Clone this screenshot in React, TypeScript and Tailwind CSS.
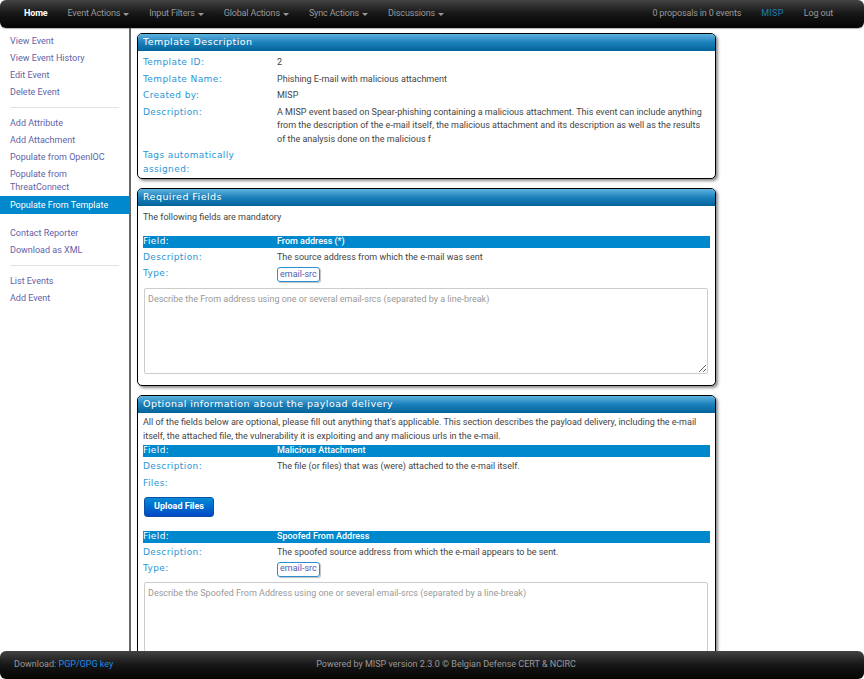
import React from "react";

const label = "font-['DejaVu_Sans',sans-serif] text-[9px] tracking-[0.4px] text-[#2a95d4]";
const body = "font-['Roboto',sans-serif] text-[9px] text-[#444]";

function Caret() {
  return (
    <span className="ml-[3px] inline-block h-0 w-0 border-x-[3px] border-t-[3px] border-x-transparent border-t-[#999] align-middle" />
  );
}

function NavItem({ text, caret, active }: { text: string; caret?: boolean; active?: boolean }) {
  return (
    <span
      className={
        "flex items-center px-[10px] tracking-[-0.15px] " +
        (active ? "font-bold text-white" : "text-[#999]")
      }
    >
      {text}
      {caret ? <Caret /> : null}
    </span>
  );
}

function SideLink({ children, active }: { children: React.ReactNode; active?: boolean }) {
  return (
    <div
      className={
        "px-[10px] leading-[13px] " +
        (active ? "bg-[#0088cc] py-[2.5px] text-white" : "py-[2px] text-[#5f63a8]")
      }
    >
      {children}
    </div>
  );
}

function Divider() {
  return <div className="mx-[10px] my-[6px] h-[2px] border-t border-[#e2e2e2] border-b-white" />;
}

function Panel({ title, children, className }: { title: string; children: React.ReactNode; className?: string }) {
  return (
    <div
      className={
        "w-[579px] rounded-[5px] border border-black bg-white shadow-[2px_2px_3px_rgba(0,0,0,0.45)] " +
        (className ?? "")
      }
    >
      <div className="flex h-[17px] items-center rounded-t-[4px] bg-gradient-to-b from-[#5cb3de] via-[#1a80bb] to-[#04639a] px-[5px] font-['DejaVu_Sans',sans-serif] text-[9.5px] tracking-[0.45px] text-white">
        {title}
      </div>
      <div className="px-[5px]">{children}</div>
    </div>
  );
}

function Row({ name, children, className }: { name: string; children?: React.ReactNode; className?: string }) {
  return (
    <div className={"flex leading-[13.5px] " + (className ?? "")}>
      <div className={"w-[134px] shrink-0 " + label}>{name}</div>
      <div className={"flex-1 " + body}>{children}</div>
    </div>
  );
}

function FieldBar({ value, className }: { value: string; className?: string }) {
  return (
    <div className={"flex h-[12px] items-center bg-[#0088cc] text-white " + (className ?? "")}>
      <div className="w-[134px] shrink-0 font-['DejaVu_Sans',sans-serif] text-[9px] tracking-[0.4px]">Field:</div>
      <div className="font-['Roboto',sans-serif] text-[9px] font-medium">{value}</div>
    </div>
  );
}

function TypeRow({ className }: { className?: string }) {
  return (
    <div className={"flex h-[15px] " + (className ?? "")}>
      <div className={"w-[134px] shrink-0 leading-[13.5px] " + label}>Type:</div>
      <span className="flex h-[15px] items-center rounded-[3px] border border-[#2a8fd0] px-[2px] font-['Roboto',sans-serif] text-[9px] text-[#5060b0] shadow-[1px_1px_1px_rgba(0,0,0,0.25)]">
        email-src
      </span>
    </div>
  );
}

function Area({ placeholder, className }: { placeholder: string; className?: string }) {
  return (
    <textarea
      placeholder={placeholder}
      className={
        "mx-[1px] block w-[564px] resize-y rounded-[2px] border border-[#ccc] px-[3px] py-[4px] font-['Roboto',sans-serif] text-[9px] leading-[12px] text-[#444] placeholder:text-[#999] " +
        (className ?? "")
      }
    />
  );
}

export default function App() {
  return (
    <div className="flex h-[679px] w-[864px] flex-col overflow-hidden bg-white font-['Roboto',sans-serif] text-[9px]">
      <div className="flex h-[28px] shrink-0 items-center justify-between rounded-[6px] bg-gradient-to-b from-[#444] via-[#161616] to-[#050505] pl-[14px] pr-[21px] shadow-[0_1px_1px_rgba(0,0,0,0.3)]">
        <div className="flex">
          <NavItem text="Home" active />
          <NavItem text="Event Actions" caret />
          <NavItem text="Input Filters" caret />
          <NavItem text="Global Actions" caret />
          <NavItem text="Sync Actions" caret />
          <NavItem text="Discussions" caret />
        </div>
        <div className="flex">
          <NavItem text="0 proposals in 0 events" />
          <span className="px-[10px] tracking-[0.3px] text-[#1f7fae]">MISP</span>
          <NavItem text="Log out" />
        </div>
      </div>

      <div className="flex min-h-0 flex-1">
        <div className="w-[131px] shrink-0 border-r-2 border-[#666] pt-[5px]">
          <SideLink>View Event</SideLink>
          <SideLink>View Event History</SideLink>
          <SideLink>Edit Event</SideLink>
          <SideLink>Delete Event</SideLink>
          <Divider />
          <SideLink>Add Attribute</SideLink>
          <SideLink>Add Attachment</SideLink>
          <SideLink>Populate from OpenIOC</SideLink>
          <SideLink>
            Populate from
            <br />
            ThreatConnect
          </SideLink>
          <SideLink active>Populate From Template</SideLink>
          <div className="h-[11px]" />
          <SideLink>Contact Reporter</SideLink>
          <SideLink>Download as XML</SideLink>
          <Divider />
          <SideLink>List Events</SideLink>
          <SideLink>Add Event</SideLink>
        </div>

        <div className="flex flex-col gap-[9px] pl-[6px] pt-[5px]">
          <Panel title="Template Description" className="shrink-0">
            <div className="flex flex-col gap-[3px] pb-[2px] pt-[5px]">
              <Row name="Template ID:">2</Row>
              <Row name="Template Name:">Phishing E-mail with malicious attachment</Row>
              <Row name="Created by:">MISP</Row>
              <Row name="Description:">
                A MISP event based on Spear-phishing containing a malicious attachment. This event can include anything
                from the description of the e-mail itself, the malicious attachment and its description as well as the
                results of the analysis done on the malicious f
              </Row>
              <Row name="Tags automatically assigned:" />
            </div>
          </Panel>

          <Panel title="Required Fields" className="shrink-0">
            <div className="pb-[11px] pt-[5px]">
              <div className={"leading-[13.5px] " + body}>The following fields are mandatory</div>
              <FieldBar value="From address (*)" className="mt-[11px]" />
              <Row name="Description:" className="mt-[3px]">The source address from which the e-mail was sent</Row>
              <TypeRow className="mt-[3px]" />
              <Area
                className="mt-[6px] h-[86px]"
                placeholder="Describe the From address using one or several email-srcs (separated by a line-break)"
              />
            </div>
          </Panel>

          <Panel title="Optional information about the payload delivery" className="shrink-0">
            <div className="pb-[10px] pt-[3px]">
              <div className={"leading-[13.5px] " + body}>
                All of the fields below are optional, please fill out anything that's applicable. This section describes the
                payload delivery, including the e-mail itself, the attached file, the vulnerability it is exploiting and any
                malicious urls in the e-mail.
              </div>
              <FieldBar value="Malicious Attachment" className="mt-[2px]" />
              <Row name="Description:" className="mt-[3px]">The file (or files) that was (were) attached to the e-mail itself.</Row>
              <Row name="Files:" className="mt-[3px]" />
              <button className="ml-[1px] mt-[7px] flex h-[20px] w-[70px] items-center justify-center rounded-[3px] border border-[#0a4fa8] bg-gradient-to-b from-[#0a8ad6] to-[#0447c4] font-['Roboto',sans-serif] text-[9px] font-bold text-white">
                Upload Files
              </button>
              <FieldBar value="Spoofed From Address" className="mt-[14px]" />
              <Row name="Description:" className="mt-[3px]">The spoofed source address from which the e-mail appears to be sent.</Row>
              <TypeRow className="mt-[2px]" />
              <Area
                className="mt-[5px] h-[86px]"
                placeholder="Describe the Spoofed From Address using one or several email-srcs (separated by a line-break)"
              />
            </div>
          </Panel>
        </div>
      </div>

      <div className="relative flex h-[28px] shrink-0 items-center rounded-[6px] bg-gradient-to-b from-[#444] via-[#161616] to-[#050505] px-[14px] text-[#999]">
        <span>
          Download: <span className="text-[#1a8ce6]">PGP/GPG key</span>
        </span>
        <span className="absolute left-[28px] right-0 text-center">Powered by MISP version 2.3.0 © Belgian Defense CERT &amp; NCIRC</span>
      </div>
    </div>
  );
}
